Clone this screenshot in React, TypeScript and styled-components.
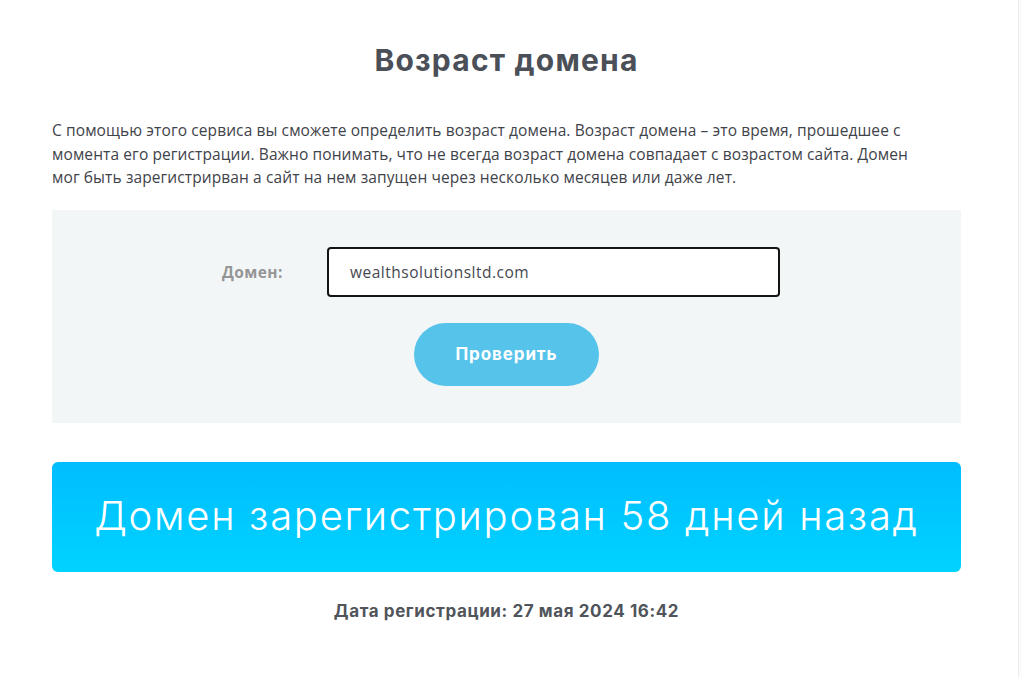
import React, { useState } from 'react'
import styled, { createGlobalStyle } from 'styled-components'

const GlobalStyle = createGlobalStyle`
  html, body {
    margin: 0;
    padding: 0;
    background: #fbfbfb;
  }
  * {
    box-sizing: border-box;
  }
`

const Page = styled.div`
  width: 1019px;
  min-height: 677px;
  background: #ffffff;
  border-right: 1px solid #ececec;
  padding: 38px 57px 40px 52px;
`

const Content = styled.div`
  width: 909px;
  display: flex;
  flex-direction: column;
`

const Title = styled.h1`
  margin: 0 0 37px;
  text-align: center;
  font-family: Inter, 'Noto Sans', sans-serif;
  font-weight: 700;
  font-size: 30px;
  line-height: 44px;
  letter-spacing: 1.2px;
  color: #4b4f58;
`

const Intro = styled.p`
  margin: 0 0 20px;
  font-family: 'Open Sans', 'Noto Sans', sans-serif;
  font-size: 15.5px;
  line-height: 23.5px;
  letter-spacing: 0.1px;
  white-space: nowrap;
  color: #3f434a;
`

const FormPanel = styled.div`
  background: #f3f6f7;
  height: 213px;
  padding-top: 37px;
  display: flex;
  flex-direction: column;
  align-items: center;
`

const FieldRow = styled.div`
  display: flex;
  align-items: center;
  margin-left: -11px;
`

const Label = styled.label`
  width: 105px;
  font-family: 'Open Sans', 'Noto Sans', sans-serif;
  font-weight: 700;
  font-size: 15.5px;
  color: #959595;
  letter-spacing: 0.4px;
`

const Input = styled.input`
  width: 453px;
  height: 50px;
  border: 2px solid #141414;
  border-radius: 4px;
  background: #fff;
  padding: 0 0 0 21px;
  font-family: 'Open Sans', 'Noto Sans', sans-serif;
  font-size: 15.5px;
  letter-spacing: 0.5px;
  color: #454850;
  outline: none;
`

const CheckButton = styled.button`
  margin-top: 26px;
  width: 185px;
  height: 63px;
  border: none;
  border-radius: 32px;
  background: #56c3ea;
  color: #fff;
  font-family: Inter, 'Noto Sans', sans-serif;
  font-weight: 700;
  font-size: 17px;
  letter-spacing: 0.9px;
  cursor: pointer;
`

const ResultBox = styled.div`
  margin-top: 39px;
  height: 110px;
  border-radius: 6px;
  background: linear-gradient(180deg, #00bdff 0%, #00d3ff 100%);
  display: flex;
  align-items: center;
  justify-content: center;
  padding-bottom: 3px;
  font-family: Inter, 'Noto Sans', sans-serif;
  font-weight: 300;
  font-size: 40px;
  letter-spacing: 1.7px;
  color: #ffffff;
`

const DateLine = styled.div`
  margin-top: 29px;
  text-align: center;
  font-family: Inter, 'Noto Sans', sans-serif;
  font-weight: 700;
  font-size: 17px;
  letter-spacing: 0.6px;
  color: #50545b;
`

export default function App() {
  const [domain, setDomain] = useState('wealthsolutionsltd.com')

  return (
    <>
      <GlobalStyle />
      <Page>
        <Content>
          <Title>Возраст домена</Title>
          <Intro>
            С помощью этого сервиса вы сможете определить возраст домена. Возраст домена – это время, прошедшее с
            <br />
            момента его регистрации. Важно понимать, что не всегда возраст домена совпадает с возрастом сайта. Домен
            <br />
            мог быть зарегистрирван а сайт на нем запущен через несколько месяцев или даже лет.
          </Intro>
          <FormPanel>
            <FieldRow>
              <Label htmlFor="domain">Домен:</Label>
              <Input id="domain" value={domain} onChange={(e) => setDomain(e.target.value)} />
            </FieldRow>
            <CheckButton>Проверить</CheckButton>
          </FormPanel>
          <ResultBox>Домен зарегистрирован 58 дней назад</ResultBox>
          <DateLine>Дата регистрации: 27 мая 2024 16:42</DateLine>
        </Content>
      </Page>
    </>
  )
}
